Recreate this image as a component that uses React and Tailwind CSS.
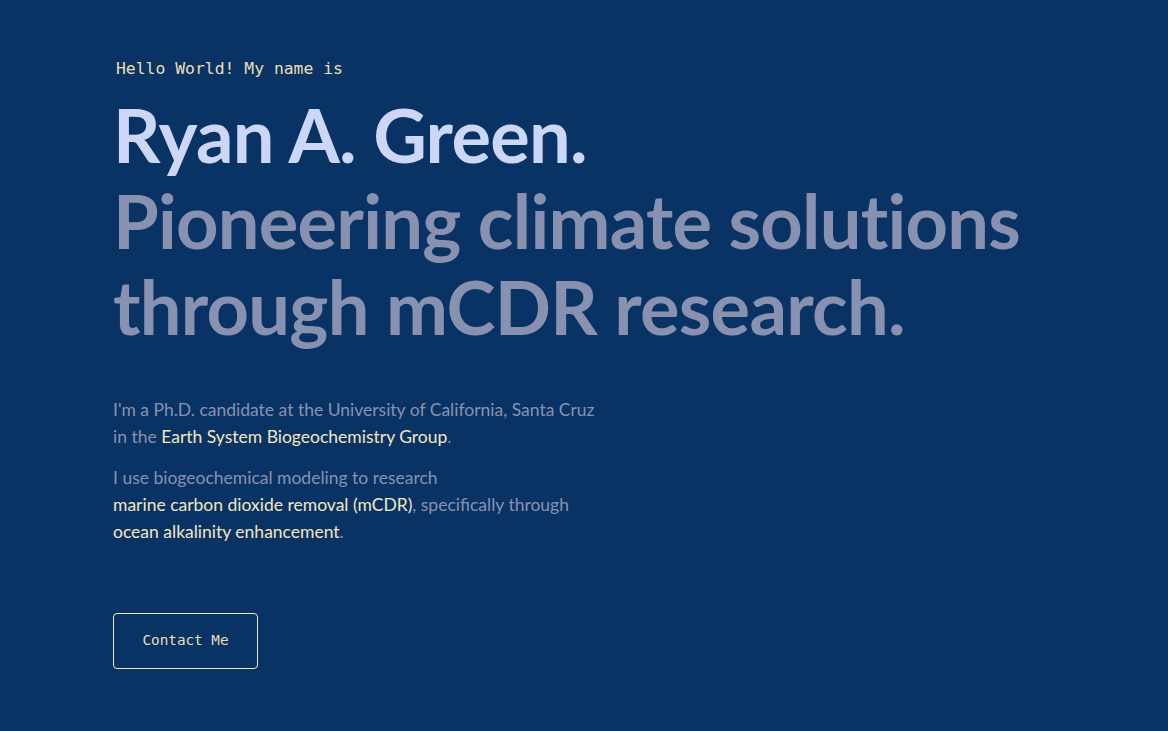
export default function App() {
  const mono = { fontFamily: '"DejaVu Sans Mono", "Liberation Mono", monospace' }
  return (
    <div className="min-h-[731px] w-full bg-[#083364] text-[#8892b0]" style={{ fontFamily: 'Lato, "Open Sans", sans-serif' }}>
      <section className="pl-[113px] pr-[60px] pt-[58px]">
        {/* Intro */}
        <p className="pl-[3px] text-[16.4px] leading-[22px] text-[#eadfb4]" style={mono}>
          Hello World! My name is
        </p>
        <h1 className="mt-[12px] text-[74px] font-bold leading-[86px] tracking-[-0.01em] text-[#ccd6f6]">
          Ryan A. Green.
        </h1>
        <h2 className="text-[74px] font-bold leading-[86px] tracking-[-0.01em] text-[#8892b0]">
          Pioneering climate solutions
          <br />
          through mCDR research.
        </h2>

        {/* Bio */}
        <div className="mt-[46px] space-y-[14px] text-[17.5px] leading-[27px]">
          <p>
            I'm a Ph.D. candidate at the University of California, Santa Cruz
            <br />
            in the <a href="#" className="text-[#f4e6c0]">Earth System Biogeochemistry Group</a>.
          </p>
          <p>
            I use biogeochemical modeling to research
            <br />
            <a href="#" className="text-[#f4e6c0]">marine carbon dioxide removal (mCDR)</a>, specifically through
            <br />
            <a href="#" className="text-[#f4e6c0]">ocean alkalinity enhancement</a>.
          </p>
        </div>

        <button
          className="mt-[68px] h-[56px] w-[145px] rounded-[4px] border border-[#f4e6c0] text-[14.3px] text-[#eadfb4]"
          style={mono}
        >
          Contact Me
        </button>
      </section>
    </div>
  )
}
